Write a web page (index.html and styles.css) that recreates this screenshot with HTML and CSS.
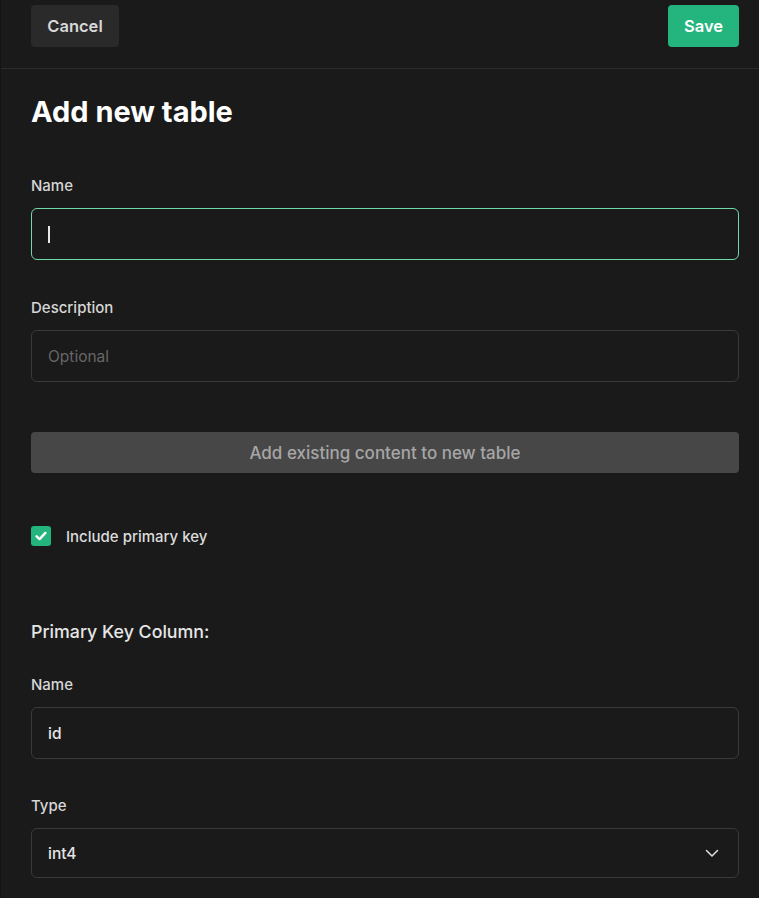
FILE: index.html
```html
<!DOCTYPE html>
<html>
<head>
<meta charset="utf-8">
<link rel="stylesheet" href="styles.css">
</head>
<body>
<div class="page">
  <header class="header">
    <button class="btn btn-cancel">Cancel</button>
    <button class="btn btn-save">Save</button>
  </header>
  <main class="content">
    <h1 class="title">Add new table</h1>

    <div class="field field-first">
      <label class="label">Name</label>
      <div class="input input-focus"><span class="caret"></span></div>
    </div>

    <div class="field field-desc">
      <label class="label">Description</label>
      <div class="input"><span class="placeholder">Optional</span></div>
    </div>

    <button class="btn-wide">Add existing content to new table</button>

    <div class="check-row">
      <span class="checkbox">
        <svg width="14" height="14" viewBox="0 0 14 14"><path d="M2.6 7.3 L5.6 10.1 L11.4 3.9" fill="none" stroke="#fff" stroke-width="2.4" stroke-linecap="round" stroke-linejoin="round"/></svg>
      </span>
      <span class="check-label">Include primary key</span>
    </div>

    <h2 class="subtitle">Primary Key Column:</h2>

    <div class="field field-pk">
      <label class="label">Name</label>
      <div class="input"><span class="value">id</span></div>
    </div>

    <div class="field">
      <label class="label">Type</label>
      <div class="input select"><span class="value">int4</span>
        <svg class="chevron" width="14" height="14" viewBox="0 0 14 14"><path d="M1.5 4.5 L7 10 L12.5 4.5" fill="none" stroke="#e0e0e0" stroke-width="1.5" stroke-linecap="round" stroke-linejoin="round"/></svg>
      </div>
    </div>
  </main>
</div>
</body>
</html>
```
FILE: styles.css
```css
html, body {
  margin: 0;
  padding: 0;
  background: #1a1a1a;
}
body {
  font-family: Inter, "Noto Sans", sans-serif;
  color: #dedede;
  height: 898px;
  overflow: hidden;
}
.page {
  border-left: 1px solid #141414;
  min-height: 898px;
}
.header {
  display: flex;
  justify-content: space-between;
  align-items: flex-start;
  padding: 5px 20px 0 30px;
  height: 63px;
  border-bottom: 1px solid #2c2c2c;
}
.btn {
  height: 42px;
  border: none;
  border-radius: 4px;
  font-family: Inter, sans-serif;
  font-size: 16.5px;
  font-weight: 600;
  padding: 0 12px;
  cursor: pointer;
}
.btn-cancel {
  background: #2a2a2a;
  color: #d8d8d8;
  width: 88px;
}
.btn-save {
  background: #24b47e;
  color: #ffffff;
  width: 71px;
}
.content {
  padding: 0 20px 0 30px;
}
.title {
  margin: 26px 0 0;
  font-size: 29px;
  line-height: 34px;
  font-weight: 700;
  color: #ffffff;
  letter-spacing: 0;
}
.field {
  display: flex;
  flex-direction: column;
  margin-top: 37px;
}
.field-first {
  margin-top: 47px;
}
.field-desc {
  margin-top: 38px;
}
.field-pk {
  margin-top: 31px;
}
.label {
  font-size: 15px;
  line-height: 20px;
  font-weight: 500;
  color: #d6d6d6;
  margin-bottom: 12px;
}
.input {
  height: 50px;
  border: 1px solid #3a3a3a;
  border-radius: 6px;
  display: flex;
  align-items: center;
  padding: 0 16px;
  box-sizing: content-box;
}
.input-focus {
  border-color: #6fd9a8;
}
.caret {
  width: 2px;
  height: 17px;
  background: #e8e8e8;
}
.placeholder {
  font-size: 15.5px;
  color: #666666;
}
.value {
  font-size: 15.5px;
  font-weight: 500;
  color: #e4e4e4;
}
.select {
  height: 48px;
  justify-content: space-between;
}
.chevron {
  margin-right: 3px;
}
.btn-wide {
  display: block;
  width: 100%;
  height: 41px;
  margin-top: 50px;
  border: none;
  border-radius: 4px;
  background: #474747;
  color: #a6a6a6;
  font-family: Inter, sans-serif;
  font-size: 17px;
  font-weight: 500;
}
.check-row {
  display: flex;
  align-items: center;
  margin-top: 53px;
  height: 20px;
}
.checkbox {
  width: 20px;
  height: 20px;
  border-radius: 3px;
  background: #24b47e;
  display: flex;
  align-items: center;
  justify-content: center;
}
.check-label {
  margin-left: 15px;
  font-size: 15px;
  font-weight: 500;
  color: #dcdcdc;
}
.subtitle {
  margin: 74px 0 0;
  font-size: 17.8px;
  line-height: 24px;
  font-weight: 500;
  color: #e6e6e6;
}
```
